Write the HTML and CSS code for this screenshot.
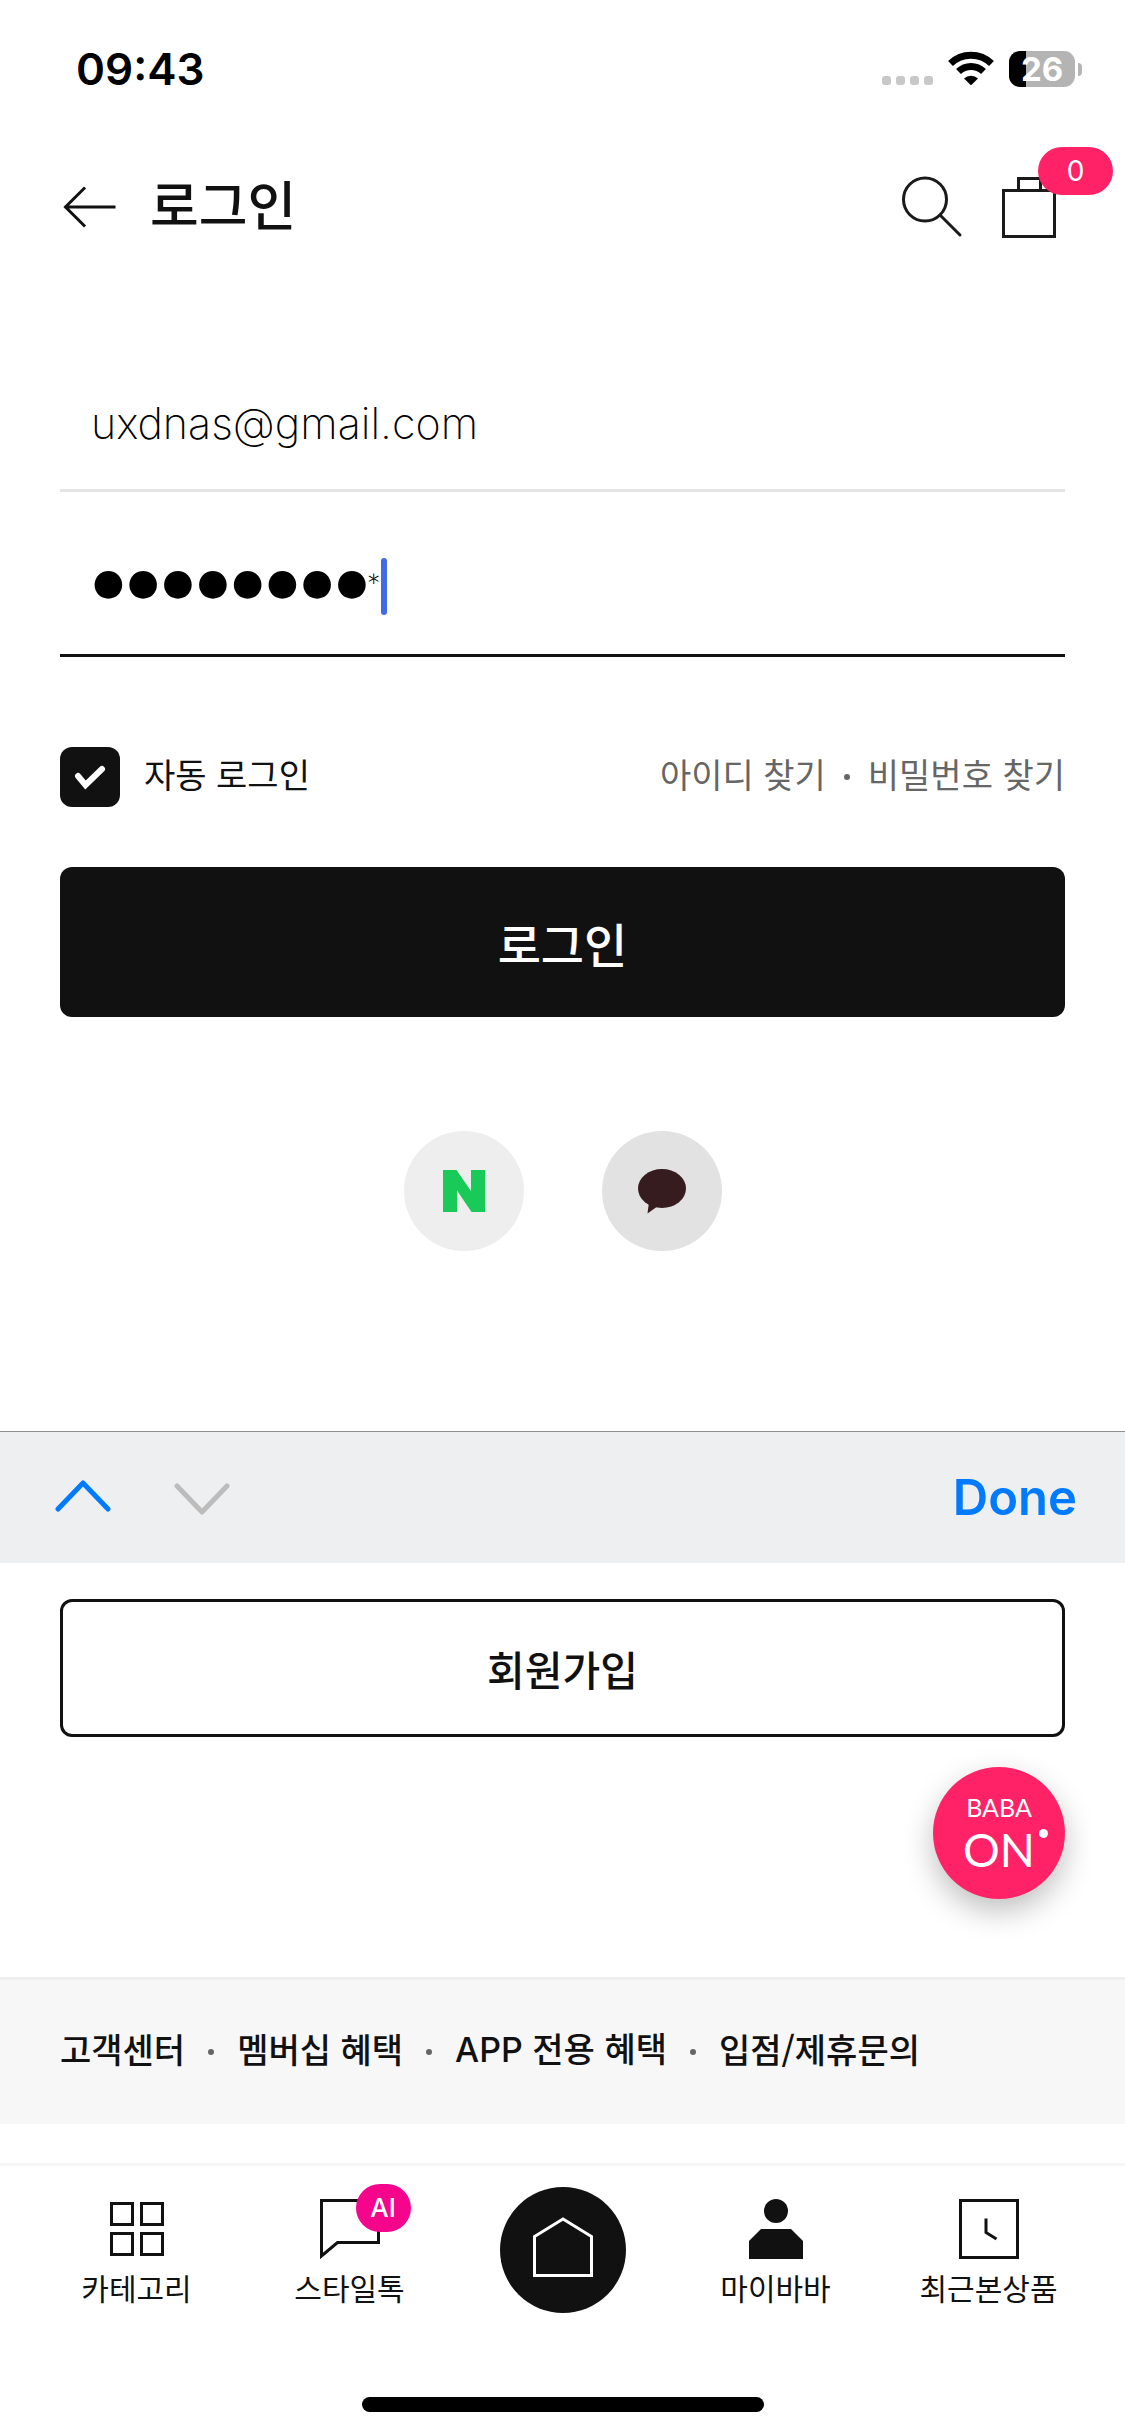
FILE: index.html
```html
<!DOCTYPE html>
<html lang="ko">
<head>
<meta charset="utf-8">
<meta name="viewport" content="width=device-width, initial-scale=1">
<title>로그인</title>
<link rel="stylesheet" href="styles.css">
</head>
<body>
<div class="page">
  <div class="status-bar">
    <span class="status-time">09:43</span>
    <div class="status-icons">
      <svg class="signal" width="51" height="36" viewBox="0 0 51 36" fill="#c8c8c8" aria-hidden="true">
        <rect x="0" y="25" width="9" height="9" rx="3"/><rect x="14" y="25" width="9" height="9" rx="3"/><rect x="28" y="25" width="9" height="9" rx="3"/><rect x="42" y="25" width="9" height="9" rx="3"/>
      </svg>
      <svg class="wifi" width="46" height="36" viewBox="0 0 46 36" aria-hidden="true">
        <g fill="none" stroke="#000" stroke-width="7">
          <path d="M2.5 12.5a29.5 29.5 0 0 1 41 0"/>
          <path d="M10.5 20.5a18 18 0 0 1 25 0"/>
        </g>
        <path d="M16 27.5a10 10 0 0 1 14 0L23.6 33.7a1 1 0 0 1-1.2 0z" fill="#000"/>
      </svg>
      <div class="battery"><span class="battery-level">26</span></div>
    </div>
  </div>

  <header class="top-bar">
    <button class="icon-button" type="button" aria-label="뒤로">
      <svg width="56" height="60" viewBox="0 0 56 60" fill="none" stroke="#111" stroke-width="3" stroke-linecap="square" aria-hidden="true">
        <path d="M6 30h48M24 11.5L5.5 30 24 48.5"/>
      </svg>
    </button>
    <h1 class="title">로그인</h1>
    <button class="icon-button" type="button" aria-label="검색">
      <svg width="64" height="66" viewBox="0 0 64 66" fill="none" stroke="#1a1a1a" stroke-width="3" stroke-linecap="round" aria-hidden="true">
        <circle cx="25" cy="25.5" r="21.5"/><path d="M40 41l20 20"/>
      </svg>
    </button>
    <button class="icon-button bag" type="button" aria-label="장바구니">
      <svg width="54" height="66" viewBox="0 0 54 66" fill="none" stroke="#1a1a1a" stroke-width="3" aria-hidden="true">
        <path d="M1.5 16.5h51v46h-51zM16.5 16.5v-12h22v12"/>
      </svg>
      <span class="bag-count">0</span>
    </button>
  </header>

  <main>
    <form class="login-form">
      <div class="field">
        <input class="field-input" type="text" value="uxdnas@gmail.com" aria-label="아이디">
      </div>
      <div class="field field-active">
        <input class="field-input field-secret" type="text" value="●●●●●●●●" aria-label="비밀번호">
        <span class="last-char">*</span>
        <span class="caret"></span>
      </div>
      <div class="options">
        <label class="auto-login"><input class="check" type="checkbox" checked><span class="option-text">자동 로그인</span></label>
        <nav class="find-links option-text">
          <a href="#">아이디 찾기</a><span class="dot"></span><a href="#">비밀번호 찾기</a>
        </nav>
      </div>
      <button class="login-button" type="button">로그인</button>
      <div class="socials">
        <button class="social naver" type="button" aria-label="네이버 로그인">
          <svg width="42" height="42" viewBox="0 0 42 42" fill="#19ca58" aria-hidden="true"><path d="M0 0h13.5L28 21V0h14v42H28.5L14 20.5V42H0z"/></svg>
        </button>
        <button class="social kakao" type="button" aria-label="카카오 로그인">
          <svg width="48" height="45" viewBox="0 0 48 45" fill="#371c1f" aria-hidden="true"><ellipse cx="24" cy="19.5" rx="24" ry="19.5"/><path d="M11 33L9.5 44.5 20 37z"/></svg>
        </button>
      </div>
    </form>

    <div class="accessory">
      <button class="icon-button" type="button" aria-label="이전">
        <svg width="56" height="36" viewBox="0 0 56 36" fill="none" stroke="#007aff" stroke-width="5" stroke-linecap="round" stroke-linejoin="round" aria-hidden="true"><path d="M3 29L28 3l25 26"/></svg>
      </button>
      <button class="icon-button next" type="button" aria-label="다음" disabled>
        <svg width="56" height="36" viewBox="0 0 56 36" fill="none" stroke="#bcbcbc" stroke-width="5" stroke-linecap="round" stroke-linejoin="round" aria-hidden="true"><path d="M3 6l25 26L53 6"/></svg>
      </button>
      <button class="done" type="button">Done</button>
    </div>

    <section class="join">
      <button class="join-button" type="button">회원가입</button>
      <button class="baba" type="button">
        <span class="baba-small">BABA</span>
        <span class="baba-large">ON</span>
        <span class="baba-dot"></span>
      </button>
    </section>
  </main>

  <footer class="links">
    <a href="#">고객센터</a><span class="dot"></span>
    <a href="#">멤버십 혜택</a><span class="dot"></span>
    <a href="#"><span class="latin">APP</span> 전용 혜택</a><span class="dot"></span>
    <a href="#">입점/제휴문의</a>
  </footer>

  <nav class="tabs">
    <a class="tab" href="#">
      <svg width="60" height="60" viewBox="0 0 60 60" fill="none" stroke="#111" stroke-width="3" aria-hidden="true"><path d="M4.5 4.5h21v21h-21zM34.5 4.5h21v21h-21zM4.5 34.5h21v21h-21zM34.5 34.5h21v21h-21z"/></svg>
      카테고리
    </a>
    <a class="tab" href="#">
      <span class="tab-icon">
        <svg width="60" height="60" viewBox="0 0 60 60" fill="none" stroke="#111" stroke-width="3" aria-hidden="true"><path d="M1.5 1.5h57v42H17.5L1.5 57z"/></svg>
        <span class="ai-badge">AI</span>
      </span>
      스타일톡
    </a>
    <a class="home" href="#" aria-label="홈">
      <svg width="60" height="60" viewBox="0 0 60 60" fill="none" stroke="#fff" stroke-width="3" aria-hidden="true"><path d="M1.5 58.5V19.5L30 2l28.5 17.5v39z"/></svg>
    </a>
    <a class="tab" href="#">
      <svg width="60" height="60" viewBox="0 0 60 60" fill="#111" aria-hidden="true"><circle cx="30" cy="12" r="12"/><path d="M3 60V42l12-12h30l12 12v18z"/></svg>
      마이바바
    </a>
    <a class="tab" href="#">
      <svg width="60" height="60" viewBox="0 0 60 60" fill="none" stroke="#111" stroke-width="3" aria-hidden="true"><path d="M1.5 1.5h57v57h-57z"/><path d="M27 19.500v14l10.500 6.500"/></svg>
      최근본상품
    </a>
  </nav>
  <div class="home-indicator"></div>
</div>
</body>
</html>
```
FILE: styles.css
```css
* { box-sizing: border-box; }

body {
  margin: 0;
  background: #fff;
  color: #111;
  font-family: "Noto Sans CJK KR", sans-serif;
}

a { color: inherit; text-decoration: none; }

button {
  padding: 0;
  border: 0;
  background: none;
  color: inherit;
  font-family: inherit;
}

svg { display: block; }

.page { display: flex; flex-direction: column; }

/* Status bar */
.status-bar {
  display: flex;
  align-items: center;
  justify-content: space-between;
  height: 138px;
  padding: 0 43px 0 76px;
}

.status-time {
  color: #000;
  font: 600 44px/48px Inter, sans-serif;
}

.status-icons { display: flex; align-items: center; }
.wifi { margin: 0 15px; }

.battery {
  display: flex;
  align-items: center;
  gap: 3px;
}

.battery-level {
  width: 66px;
  height: 36px;
  border-radius: 11px;
  background: linear-gradient(to right, #000 17px, #b4b4b4 17px);
  color: #fff;
  font: 700 33px/36px Inter, sans-serif;
  text-align: center;
}

.battery::after {
  content: "";
  width: 4px;
  height: 13px;
  border-radius: 0 4px 4px 0;
  background: #b4b4b4;
}

/* Top bar */
.top-bar {
  display: flex;
  align-items: center;
  height: 138px;
  padding: 0 69px 0 60px;
}

.title {
  flex: 1;
  margin: 0 0 0 34px;
  padding-bottom: 8px;
  font-size: 53px;
  font-weight: 500;
  line-height: 60px;
}

.bag {
  position: relative;
  margin-left: 38px;
}

.bag-count {
  position: absolute;
  top: -27px;
  left: 36px;
  width: 75px;
  height: 48px;
  border-radius: 24px;
  background: #ff2266;
  color: #fff;
  font: 400 28px/48px Inter, sans-serif;
}

/* Login form */
.login-form { padding: 84px 60px 180px; }

.field {
  display: flex;
  align-items: center;
  height: 132px;
  padding: 0 0 4px 31px;
  border-bottom: 3px solid #e5e5e5;
}

.field-active {
  height: 135px;
  margin-top: 30px;
  border-color: #111;
}

.field-input {
  width: 100%;
  padding: 0;
  border: 0;
  outline: 0;
  background: none;
  color: #000;
  font: 200 43px/60px Inter, sans-serif;
}

.field-secret {
  width: 275px;
  padding-bottom: 12px;
  font: 300 58px/72px Lato, sans-serif;
}

.last-char {
  color: #000;
  font: 300 36px/48px Lato, sans-serif;
}

.caret {
  width: 6px;
  height: 57px;
  border-radius: 3px;
  background: #4169e8;
}

.options {
  display: flex;
  align-items: center;
  justify-content: space-between;
  margin-top: 90px;
  font-size: 34px;
  line-height: 48px;
}

.option-text { padding-bottom: 6px; }

.auto-login {
  display: flex;
  align-items: center;
  gap: 24px;
}

.check {
  width: 60px;
  height: 60px;
  margin: 0;
  border-radius: 12px;
  appearance: none;
  background: #111 url("data:image/svg+xml,%3Csvg xmlns='http://www.w3.org/2000/svg' viewBox='0 0 60 60'%3E%3Cpath d='M18 29l7.500 9L42 22' fill='none' stroke='%23fff' stroke-width='6' stroke-linecap='round'/%3E%3C/svg%3E");
}

.find-links {
  display: flex;
  align-items: center;
  gap: 18px;
  color: #666;
}

.dot {
  width: 6px;
  height: 6px;
  margin-top: 6px;
  border-radius: 50%;
  background: #666;
}

.login-button {
  display: block;
  width: 100%;
  height: 150px;
  margin-top: 60px;
  border-radius: 12px;
  background: #111;
  color: #fff;
  font-size: 47px;
  font-weight: 500;
}

.socials {
  display: flex;
  justify-content: center;
  gap: 78px;
  margin-top: 114px;
}

.social {
  display: grid;
  place-items: center;
  width: 120px;
  height: 120px;
  border-radius: 50%;
}

.naver { background: #eee; }
.kakao { background: #e2e2e2; }

/* Keyboard accessory bar */
.accessory {
  display: flex;
  align-items: center;
  height: 132px;
  padding: 0 48px 0 55px;
  border-top: 1px solid #8e8f92;
  background: #eeeff1;
}

.next { margin-left: 63px; }

.done {
  margin-left: auto;
  color: #007aff;
  font: 600 49px/60px Inter, sans-serif;
}

/* Sign up */
.join {
  position: relative;
  padding: 36px 60px 240px;
}

.join-button {
  display: block;
  width: 100%;
  height: 138px;
  border: 3px solid #111;
  border-radius: 12px;
  font-size: 41px;
  font-weight: 500;
}

.baba {
  position: absolute;
  right: 60px;
  bottom: 78px;
  display: flex;
  flex-direction: column;
  align-items: center;
  width: 132px;
  height: 132px;
  padding-top: 25px;
  border-radius: 50%;
  background: #ff2266;
  box-shadow: 0 12px 30px rgba(0, 0, 0, 0.25);
  color: #fff;
  font-family: Lato, sans-serif;
}

.baba-small { font-size: 25px; line-height: 30px; }
.baba-large { font-size: 46px; line-height: 55px; }

.baba-dot {
  position: absolute;
  top: 62px;
  right: 17px;
  width: 9px;
  height: 9px;
  border-radius: 50%;
  background: #fff;
}

/* Footer links */
.links {
  display: flex;
  align-items: center;
  gap: 23px;
  height: 147px;
  padding: 0 60px 7px;
  border-top: 3px solid #efefef;
  background: #f7f7f7;
  font-size: 34px;
  font-weight: 500;
  line-height: 48px;
}

.latin { font-family: Inter, sans-serif; }

/* Tab bar */
.tabs {
  display: grid;
  grid-template-columns: repeat(5, 1fr);
  justify-items: center;
  height: 234px;
  margin-top: 39px;
  padding: 21px 30px 0;
  border-top: 3px solid #f5f5f5;
  font-size: 30px;
  line-height: 36px;
}

.tab {
  display: flex;
  flex-direction: column;
  align-items: center;
  gap: 10px;
  padding-top: 12px;
}

.tab-icon { position: relative; }

.ai-badge {
  position: absolute;
  top: -15px;
  left: 36px;
  width: 55px;
  height: 48px;
  border-radius: 24px;
  background: #f5058c;
  color: #fff;
  font: 500 26px/48px Inter, sans-serif;
  text-align: center;
}

.home {
  display: grid;
  place-items: center;
  width: 126px;
  height: 126px;
  padding-bottom: 6px;
  border-radius: 50%;
  background: #111;
}

.home-indicator {
  align-self: center;
  width: 402px;
  height: 15px;
  margin-bottom: 24px;
  border-radius: 8px;
  background: #000;
}
```
